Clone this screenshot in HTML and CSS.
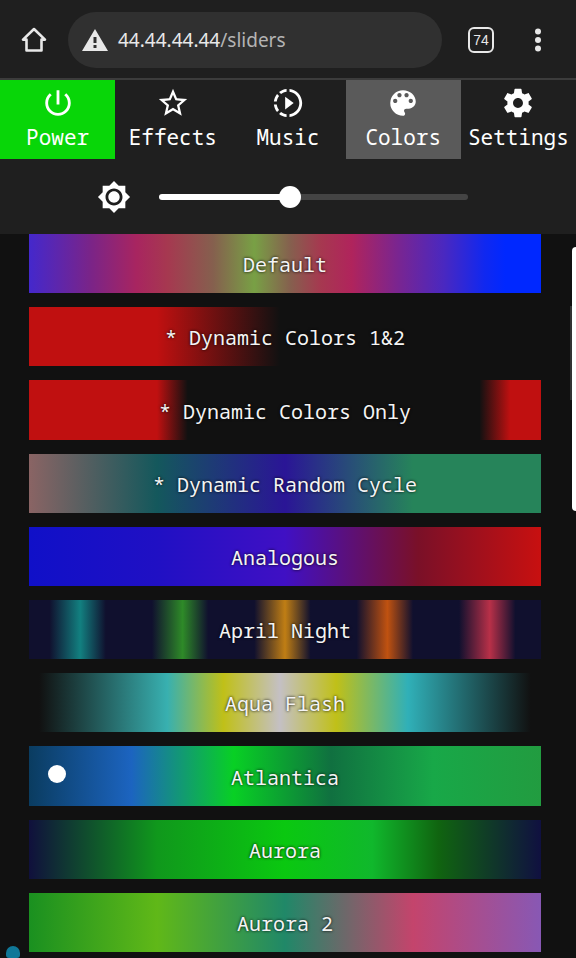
FILE: index.html
```html
<!DOCTYPE html>
<html lang="en">
<head>
	<meta charset="utf-8">
	<meta name="viewport" content="width=device-width, initial-scale=1.0">
	<title>Colors</title>
	<link rel="stylesheet" href="styles.css">
</head>
<body>

<div class="browser">
	<button class="home" aria-label="Home">
		<svg viewBox="0 0 28 28"><path d="M14 3L3 13.600h3.500V24.500h15V13.600H25z" fill="none" stroke="currentColor" stroke-width="2.600" stroke-linejoin="round"/></svg>
	</button>
	<button class="address">
		<svg viewBox="0 0 26 22"><path fill="currentColor" fill-rule="evenodd" d="M13 0L0 22h26zM11.500 8h3v6h-3zM11.500 16h3v3h-3z"/></svg>
		<span class="url">44.44.44.44<span class="path">/sliders</span></span>
	</button>
	<button class="count">74</button>
	<button class="more" aria-label="Menu">
		<svg viewBox="0 0 8 24"><g fill="currentColor"><circle cx="4" cy="3.500" r="3"/><circle cx="4" cy="12" r="3"/><circle cx="4" cy="20.500" r="3"/></g></svg>
	</button>
</div>

<div class="tabs">
	<button class="tab on">
		<svg viewBox="0 0 24 24"><path d="M13 3h-2v10h2V3zm4.830 2.170l-1.420 1.420C17.990 7.860 19 9.810 19 12c0 3.870-3.130 7-7 7s-7-3.130-7-7c0-2.190 1.010-4.140 2.580-5.420L6.170 5.170C4.230 6.820 3 9.260 3 12c0 4.970 4.030 9 9 9s9-4.030 9-9c0-2.740-1.230-5.180-3.170-6.830z"/></svg>
		<span>Power</span>
	</button>
	<button class="tab">
		<svg viewBox="0 0 24 24"><path d="M22 9.240l-7.190-.620L12 2 9.190 8.630 2 9.240l5.460 4.730L5.820 21 12 17.270 18.180 21l-1.630-7.030L22 9.240zM12 15.400l-3.760 2.270 1-4.280-3.320-2.880 4.380-.380L12 6.100l1.710 4.040 4.380.380-3.320 2.880 1 4.280L12 15.400z"/></svg>
		<span>Effects</span>
	</button>
	<button class="tab">
		<svg viewBox="0 0 24 24"><path d="M10 7.500v9L16 12zM11 4.070V2.050c-2.010.2-3.840 1-5.320 2.210L7.100 5.690c1.110-.86 2.440-1.440 3.900-1.620zM5.690 7.100L4.260 5.680C3.050 7.160 2.250 8.990 2.050 11h2.020c.18-1.460.76-2.790 1.620-3.900zM4.070 13H2.050c.2 2.010 1 3.840 2.210 5.320l1.430-1.430c-.86-1.100-1.440-2.430-1.620-3.890zm1.610 6.740C7.160 20.950 9 21.750 11 21.950v-2.020c-1.460-.18-2.790-.76-3.900-1.620l-1.420 1.430zM22 12c0 5.160-3.920 9.420-8.950 9.950v-2.020C16.970 19.410 20 16.050 20 12s-3.030-7.410-6.950-7.930V2.050C18.080 2.580 22 6.840 22 12z"/></svg>
		<span>Music</span>
	</button>
	<button class="tab active">
		<svg viewBox="0 0 24 24"><path d="M12 3a9 9 0 0 0 0 18c.83 0 1.500-.67 1.500-1.500 0-.39-.15-.74-.39-1.010-.23-.26-.38-.61-.38-.99 0-.83.67-1.500 1.500-1.500H16c2.760 0 5-2.240 5-5 0-4.420-4.030-8-9-8zm-5.500 9c-.83 0-1.500-.67-1.500-1.500S5.670 9 6.500 9 8 9.670 8 10.500 7.330 12 6.500 12zm3-4C8.670 8 8 7.330 8 6.500S8.670 5 9.500 5s1.500.67 1.500 1.500S10.330 8 9.500 8zm5 0c-.83 0-1.500-.67-1.500-1.500S13.670 5 14.500 5s1.500.67 1.500 1.500S15.330 8 14.500 8zm3 4c-.83 0-1.500-.67-1.500-1.500S16.670 9 17.500 9s1.500.67 1.500 1.500-.67 1.500-1.500 1.500z"/></svg>
		<span>Colors</span>
	</button>
	<button class="tab">
		<svg viewBox="0 0 24 24"><path d="M19.430 12.980c.04-.32.07-.64.07-.98s-.03-.66-.07-.98l2.110-1.650c.19-.15.24-.42.12-.64l-2-3.460c-.12-.22-.39-.3-.61-.22l-2.490 1c-.52-.4-1.080-.73-1.690-.98l-.38-2.650C14.460 2.180 14.250 2 14 2h-4c-.25 0-.46.18-.49.42l-.38 2.650c-.61.25-1.170.59-1.690.98l-2.490-1c-.23-.09-.49 0-.61.22l-2 3.460c-.13.22-.07.49.12.64l2.110 1.650c-.04.32-.07.65-.07.98s.03.66.07.98l-2.110 1.650c-.19.15-.24.42-.12.64l2 3.460c.12.22.39.3.61.22l2.490-1c.52.4 1.080.73 1.690.98l.38 2.650c.03.24.24.42.49.42h4c.25 0 .46-.18.49-.42l.38-2.650c.61-.25 1.170-.59 1.690-.98l2.490 1c.23.09.49 0 .61-.22l2-3.460c.12-.22.07-.49-.12-.64l-2.110-1.650zM12 15.500c-1.930 0-3.500-1.570-3.500-3.500s1.570-3.500 3.500-3.500 3.500 1.570 3.500 3.500-1.570 3.500-3.500 3.500z"/></svg>
		<span>Settings</span>
	</button>
</div>

<div class="bri">
	<label for="bri" aria-label="Brightness">
		<svg viewBox="0 0 24 24"><path d="M20 8.690V4h-4.690L12 .69 8.690 4H4v4.690L.69 12 4 15.310V20h4.690L12 23.310 15.310 20H20v-4.690L23.310 12 20 8.690zM12 18c-3.310 0-6-2.690-6-6s2.690-6 6-6 6 2.690 6 6-2.690 6-6 6zm0-10c-2.210 0-4 1.790-4 4s1.790 4 4 4 4-1.790 4-4-1.790-4-4-4z"/></svg>
	</label>
	<input type="range" id="bri" min="0" max="255" value="107">
</div>

<div class="palettes">
	<button class="pal default">Default</button>
	<button class="pal dynamic12">* Dynamic Colors 1&amp;2</button>
	<button class="pal dynamic-only">* Dynamic Colors Only</button>
	<button class="pal random">* Dynamic Random Cycle</button>
	<button class="pal analogous">Analogous</button>
	<button class="pal april">April Night</button>
	<button class="pal aqua">Aqua Flash</button>
	<button class="pal atlantica">Atlantica<i class="touch"></i></button>
	<button class="pal aurora">Aurora</button>
	<button class="pal aurora2">Aurora 2</button>
</div>

<!-- overlays -->
<i class="scroll"></i>
<i class="edge"></i>
<i class="dot"></i>

</body>
</html>
```
FILE: styles.css
```css
*{
	box-sizing:border-box;
}
body{
	margin:0; min-height:100vh; background:#111; color:#fff;
	display:flex; flex-direction:column;
	position:relative; overflow-x:hidden;
	font-family:"Noto Sans Mono","DejaVu Sans Mono",monospace;
}
button{
	margin:0; padding:0; border:0; background:none;
	color:inherit; font-family:inherit;
}
svg{
	display:block; fill:currentColor;
}

/* browser bar */
.browser{
	height:80px; padding:2px 34px 0 20px;
	display:flex; align-items:center;
	background:#1f1f1f; border-bottom:2px solid #3c3c3c; color:#e8e8e8;
}
.home svg{
	width:28px; height:28px;
}
.address{
	flex:1; height:56px; margin:0 26px 0 20px; padding:0 14px;
	display:flex; align-items:center; gap:10px;
	background:#303030; border-radius:28px;
	font-family:"Noto Sans",sans-serif; font-size:19px;
}
.address svg{
	width:26px; height:22px;
}
.path{
	color:#b4b4b4;
}
.count{
	width:26px; height:26px; margin-right:40px;
	border:2px solid #e8e8e8; border-radius:6px;
	font:14px "Liberation Sans",sans-serif;
}
.more svg{
	width:8px; height:24px;
}

/* tabs */
.tabs{
	display:grid; grid-template-columns:repeat(5,1fr);
	background:#1f1f1f;
}
.tab{
	height:79px; padding-top:6px;
	display:flex; flex-direction:column; align-items:center;
	font-size:21px; line-height:34px;
}
.tab svg{
	width:34px; height:34px;
}
.on{
	background:#08d608;
}
.active{
	background:#5a5a5a;
}

/* brightness */
.bri{
	height:75px; padding:0 108px 0 97px;
	display:flex; align-items:center; gap:28px;
	background:#1f1f1f;
}
.bri svg{
	width:34px; height:34px;
}
.bri input{
	flex:1; min-width:0; height:22px; margin:0;
	-webkit-appearance:none; appearance:none; background:none;
}
.bri input::-webkit-slider-runnable-track{
	height:6px; border-radius:3px;
	background:linear-gradient(90deg,#fff 42%,#444 42%);
}
.bri input::-webkit-slider-thumb{
	-webkit-appearance:none;
	width:22px; height:22px; margin-top:-8px;
	background:#fff; border-radius:50%;
}

/* palette list */
.palettes{
	flex:1; padding:0 35px 6px 29px;
	display:flex; flex-direction:column; gap:14px;
}
.pal{
	flex:1; min-height:59px; padding-top:2px; position:relative;
	font-size:20px; color:#f4f4f4;
	text-shadow:0 0 3px #000;
}
.default{
	background:linear-gradient(90deg,#4428cc,#7a2488 12%,#a82560 21%,#a63850 27%,#85604e 36%,#78a045 44%,#85604e 51%,#a63850 57%,#b0245c 63%,#7a2590 72%,#4a28c0 81%,#1028f0 89%,#0028ff 93%);
}
.dynamic12{
	background:linear-gradient(90deg,#c01010 25%,#111 49%);
}
.dynamic-only{
	background:linear-gradient(90deg,#c01010 25%,#111 31%,#111 88%,#c01010 94%);
}
.random{
	background:linear-gradient(90deg,#8a6464,#14585c 25%,#2a1596 50%,#26845a 75%);
}
.analogous{
	background:linear-gradient(90deg,#1010c8,#2010c4 25%,#4010c4 50%,#7a1028 76%,#c81010);
}
.april{
	background:linear-gradient(90deg,#10102e 4%,#128080 10%,#10102e 15%,#10102e 24%,#2e8a28 30%,#10102e 35%,#10102e 44%,#c07e14 50%,#10102e 55%,#10102e 64%,#c05210 70%,#10102e 75%,#10102e 84%,#b83048 90%,#10102e 95%);
}
.aqua{
	background:linear-gradient(90deg,#111 2%,#38b0b0 27%,#c0c018 38%,#c4c0c4 49%,#c0c018 60%,#30b0b8 74%,#111 98%);
}
.atlantica{
	background:linear-gradient(90deg,#0a3c60,#1c64c0 20%,#08d024 40%,#107040 59%,#18a848 79%,#229c40);
}
.aurora{
	background:linear-gradient(90deg,#10103c,#10981c 25%,#0ac810 50%,#10b82c 67%,#106410 80%,#101040);
}
.aurora2{
	background:linear-gradient(90deg,#1a9020,#60b818 25%,#208868 50%,#c4446c 75%,#8858b4);
}

/* touch marker and edge handles */
.touch{
	width:18px; height:18px; position:absolute; left:19px; top:19px;
	background:#fff; border-radius:50%;
}
.scroll{
	width:4px; height:264px; position:absolute; right:0; top:247px;
	background:#fff; border-radius:4px 0 0 4px;
}
.edge{
	width:2px; height:94px; position:absolute; right:4px; top:306px;
	background:#333;
}
.dot{
	width:14px; height:12px; position:absolute; left:6px; bottom:0;
	background:#107898; border-radius:7px 7px 3px 3px;
}
```
